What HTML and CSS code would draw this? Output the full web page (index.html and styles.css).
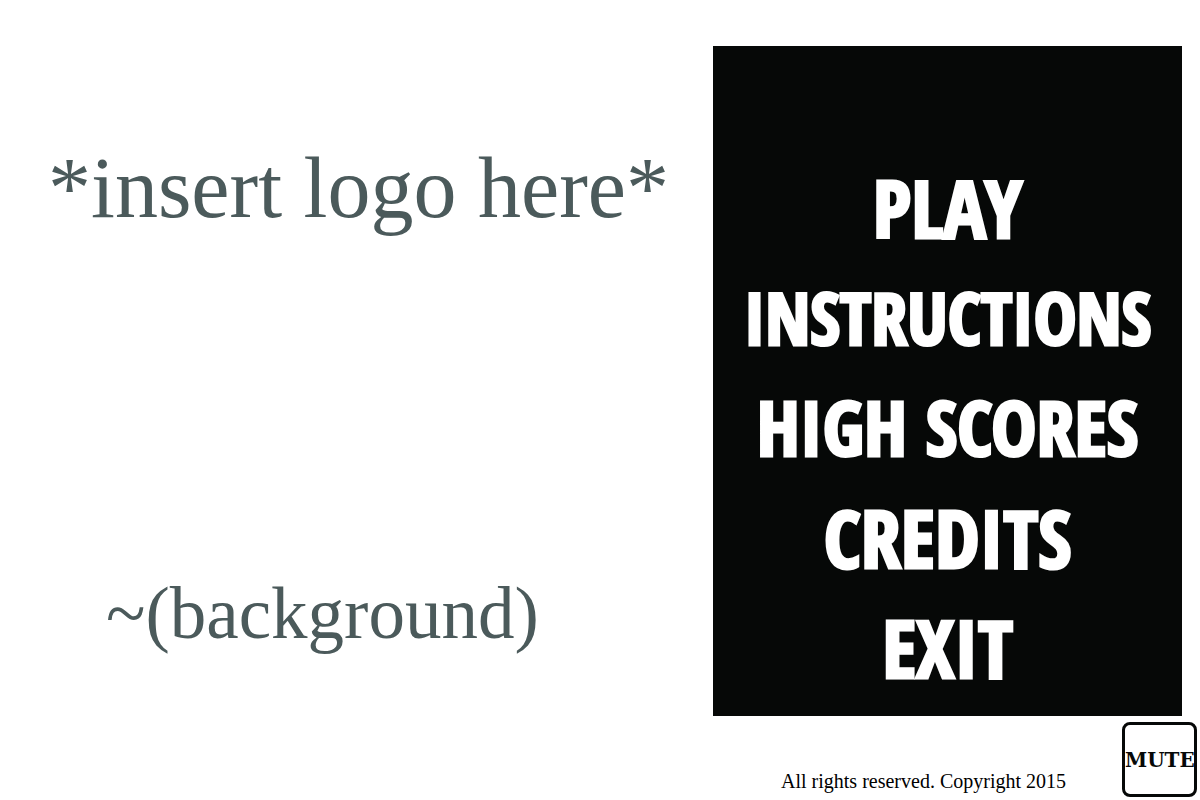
FILE: index.html
```html
<!DOCTYPE html>
<html lang="en">
<head>
<meta charset="utf-8">
<title>Main menu</title>
<link rel="stylesheet" href="styles.css">
</head>
<body>
<main class="screen">
  <section class="stage">
    <h1 class="logo">*insert logo here*</h1>
    <p class="backdrop">~(background)</p>
  </section>
  <section class="side">
    <nav class="menu">
      <button class="item" type="button">PLAY</button>
      <button class="item item-long" type="button">INSTRUCTIONS</button>
      <button class="item item-medium" type="button">HIGH SCORES</button>
      <button class="item" type="button">CREDITS</button>
      <button class="item" type="button">EXIT</button>
    </nav>
    <footer class="footer">
      <p class="copyright">All rights reserved. Copyright 2015</p>
      <button class="mute" type="button">MUTE</button>
    </footer>
  </section>
</main>
</body>
</html>
```
FILE: styles.css
```css
* {
  box-sizing: border-box;
}

body {
  margin: 0;
  background: #fff;
  font-family: "Liberation Serif", serif;
}

h1,
p {
  margin: 0;
  font-weight: 400;
}

.screen {
  display: grid;
  grid-template-columns: 713fr 487fr;
  min-height: 100vh;
}

.stage {
  display: flex;
  flex-direction: column;
  justify-content: space-between;
  padding: 140px 24px 144px 48px;
  color: #4b5a5b;
  white-space: nowrap;
}

.logo {
  font-size: 86px;
  line-height: 96px;
}

.backdrop {
  padding-left: 58px;
  font-size: 73px;
  line-height: 84px;
}

.side {
  display: flex;
  flex-direction: column;
  padding-top: 46px;
}

.menu {
  display: flex;
  flex-direction: column;
  align-items: center;
  flex: 1;
  margin-right: 18px;
  padding: 106px 0 14px;
  background: #060807;
}

.item {
  padding: 0;
  border: 0;
  background: none;
  color: #fff;
  font: 800 80px/110px "Open Sans Condensed", "Liberation Sans Narrow", sans-serif;
  -webkit-text-stroke: 3px #fff;
  white-space: nowrap;
}

.item-long {
  font-size: 72px;
}

.item-medium {
  font-size: 76px;
}

.footer {
  display: flex;
  justify-content: flex-end;
  align-items: flex-end;
  gap: 56px;
  padding: 6px 3px 3px;
}

.copyright {
  padding-bottom: 4px;
  font-size: 20px;
  line-height: 24px;
}

.mute {
  width: 75px;
  height: 75px;
  padding: 0;
  border: 3px solid #060807;
  border-radius: 8px;
  background: #fff;
  color: #060807;
  font: 700 20px/24px "DejaVu Serif", serif;
}
```
